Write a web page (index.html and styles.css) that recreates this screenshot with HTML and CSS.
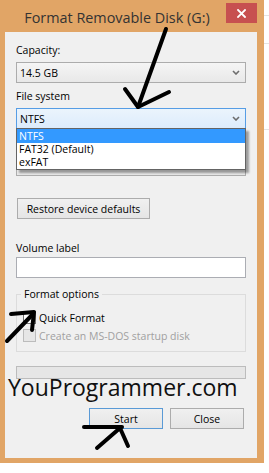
FILE: index.html
```html
<!DOCTYPE html>
<html>
<head>
<meta charset="utf-8">
<link rel="stylesheet" href="styles.css">
</head>
<body>
<div class="page">
  <div class="window">
    <div class="titlebar">
      <div class="title">Format Removable Disk (G:)</div>
      <div class="close">
        <svg width="9" height="9" viewBox="0 0 9 9"><path d="M1 1L8 8M8 1L1 8" stroke="#fff" stroke-width="1.8" stroke-linecap="square"/></svg>
      </div>
    </div>
    <div class="panel">
      <div class="lbl lbl-cap">Capacity:</div>
      <div class="combo cap">
        <span>14.5 GB</span>
        <svg class="chev" width="8" height="5" viewBox="0 0 8 5"><path d="M1 1L4 4L7 1" stroke="#6d6d6d" stroke-width="1.6" fill="none"/></svg>
      </div>
      <div class="lbl lbl-fs">File system</div>
      <div class="combo-wrap">
        <div class="combo open">
          <span>NTFS</span>
          <svg class="chev" width="8" height="5" viewBox="0 0 8 5"><path d="M1 1L4 4L7 1" stroke="#6d6d6d" stroke-width="1.6" fill="none"/></svg>
        </div>
        <div class="dropdown">
          <div class="opt sel">NTFS</div>
          <div class="opt">FAT32 (Default)</div>
          <div class="opt">exFAT</div>
        </div>
      </div>
      <div class="combo alloc"></div>
      <div class="btn btn-restore">Restore device defaults</div>
      <div class="lbl lbl-vol">Volume label</div>
      <div class="textbox"></div>
      <div class="group">
        <div class="legend">Format options</div>
        <div class="check-row">
          <span class="cb"></span><span>Quick Format</span>
        </div>
        <div class="check-row disabled">
          <span class="cb"></span><span>Create an MS-DOS startup disk</span>
        </div>
      </div>
      <div class="progress"></div>
      <div class="brand">YouProgrammer.com</div>
      <div class="actions">
        <div class="btn btn-start">Start</div>
        <div class="btn btn-close">Close</div>
      </div>
    </div>
  </div>
  <div class="bg-strip"></div>
  <svg class="annot" width="269" height="473" viewBox="0 0 269 473">
    <g stroke="#000" stroke-width="4" stroke-linecap="round" stroke-linejoin="round" fill="none">
      <path d="M166 29L138 107"/>
      <path d="M125 89L138 107L169 92"/>
      <path d="M7 341L33 314"/>
      <path d="M11 314L34 312L32 330"/>
      <path d="M84 427L122 427"/>
      <path d="M97 448L120 428L128 446"/>
    </g>
  </svg>
</div>
</body>
</html>
```

FILE: styles.css
```css
html, body {
  margin: 0;
  padding: 0;
  background: #ffffff;
}
body {
  font-family: "Open Sans", "Noto Sans", sans-serif;
  font-size: 10.5px;
  color: #000;
}
.page {
  position: relative;
  width: 269px;
  height: 473px;
  overflow: hidden;
  display: flex;
  align-items: flex-start;
}
.window {
  width: 264px;
  height: 463px;
  box-sizing: border-box;
  background: #e1a566;
  padding: 0 7px 5px 5px;
  display: flex;
  flex-direction: column;
}
.bg-strip {
  width: 5px;
  height: 473px;
  background:
    linear-gradient(#e4e4e4, #e4e4e4) 0 15px / 5px 1px no-repeat,
    linear-gradient(#e4e4e4, #e4e4e4) 0 43px / 5px 1px no-repeat,
    linear-gradient(#e4e4e4, #e4e4e4) 0 129px / 5px 1px no-repeat;
}
.titlebar {
  height: 32px;
  display: flex;
  align-items: flex-start;
  margin-right: -6px;
}
.title {
  flex: 1;
  text-align: center;
  font-family: "Open Sans", sans-serif;
  font-size: 14.4px;
  color: #333;
  line-height: 20px;
  padding-top: 8px;
  padding-left: 3px;
}
.close {
  width: 31px;
  height: 20px;
  margin-top: 3px;
  margin-right: 6px;
  background: #c75050;
  display: flex;
  align-items: center;
  justify-content: center;
}
.panel {
  flex: 1;
  background: #f0f0f0;
  padding: 0 11px 0 11px;
  display: flex;
  flex-direction: column;
}
.lbl {
  line-height: 14px;
  height: 14px;
}
.lbl-cap { margin-top: 11px; }
.lbl-fs { margin-top: 6px; }
.lbl-vol { margin-top: 22px; }
.combo {
  height: 21px;
  box-sizing: border-box;
  border: 1px solid #acacac;
  background: linear-gradient(#f5f5f5, #e8e8e8);
  display: flex;
  align-items: center;
  padding: 0 5px 0 3px;
  justify-content: space-between;
}
.combo.cap {
  margin-top: 5px;
}
.combo-wrap {
  position: relative;
  margin-top: 5px;
}
.combo.open {
  border-color: #569de5;
  background: linear-gradient(#ebf4fc, #dcecfc);
}
.combo.alloc {
  margin-top: 26px;
  background: #e9e9e9;
}
.dropdown {
  position: absolute;
  left: 0;
  right: 0;
  top: 20px;
  background: #fff;
  border: 1px solid #646464;
  box-shadow: 3px 3px 2px rgba(0, 0, 0, 0.35);
  z-index: 2;
}
.opt {
  height: 13px;
  line-height: 13px;
  padding-left: 2px;
}
.opt.sel {
  background: #3399ff;
  color: #fff;
  height: 14px;
  line-height: 14px;
}
.btn {
  box-sizing: border-box;
  height: 21px;
  border: 1px solid #acacac;
  background: linear-gradient(#f0f0f0, #e5e5e5);
  display: flex;
  align-items: center;
  justify-content: center;
}
.btn-restore {
  margin-top: 22px;
  width: 133px;
  margin-left: 1px;
}
.textbox {
  margin-top: 2px;
  height: 21px;
  box-sizing: border-box;
  border: 1px solid #abadb3;
  background: #fff;
}
.group {
  margin-top: 16px;
  height: 58px;
  box-sizing: border-box;
  border: 1px solid #dcdcdc;
  position: relative;
  padding: 16px 0 0 6px;
}
.legend {
  position: absolute;
  top: -8px;
  left: 4px;
  padding: 0 3px;
  background: #f0f0f0;
  line-height: 14px;
}
.check-row {
  display: flex;
  align-items: center;
  height: 13px;
  gap: 3px;
  margin-bottom: 5px;
}
.cb {
  width: 11px;
  height: 11px;
  border: 1px solid #707070;
  background: #fff;
}
.check-row.disabled {
  color: #a0a0a0;
}
.check-row.disabled .cb {
  border-color: #bcbcbc;
  background: #e6e6e6;
}
.progress {
  margin-top: 14px;
  height: 13px;
  box-sizing: border-box;
  border: 1px solid #bcbcbc;
  background: #e6e6e6;
}
.brand {
  margin-left: -8px;
  margin-top: -2px;
  font-family: "Open Sans", sans-serif;
  font-size: 23px;
  line-height: 20px;
  height: 20px;
  color: #111;
}
.actions {
  margin-top: 11px;
  display: flex;
  justify-content: flex-end;
  gap: 7px;
  margin-right: 2px;
}
.btn-start, .btn-close {
  width: 74px;
  height: 21px;
}
.btn-start {
  border-color: #5a9ad6;
}
.annot {
  position: absolute;
  left: 0;
  top: 0;
  pointer-events: none;
}
```
